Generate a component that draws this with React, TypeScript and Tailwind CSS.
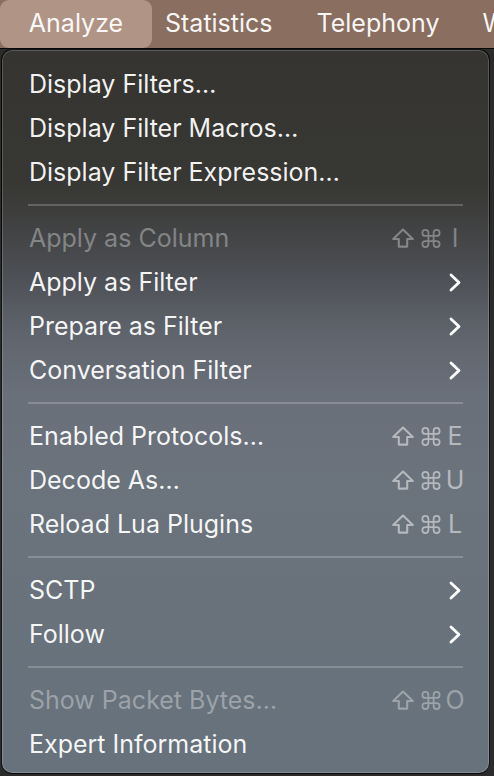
import React from "react";

type Item =
  | { kind: "sep" }
  | { kind: "item"; label: string; disabled?: boolean; sub?: boolean; key?: string };

const items: Item[] = [
  { kind: "item", label: "Display Filters…" },
  { kind: "item", label: "Display Filter Macros…" },
  { kind: "item", label: "Display Filter Expression…" },
  { kind: "sep" },
  { kind: "item", label: "Apply as Column", disabled: true, key: "I" },
  { kind: "item", label: "Apply as Filter", sub: true },
  { kind: "item", label: "Prepare as Filter", sub: true },
  { kind: "item", label: "Conversation Filter", sub: true },
  { kind: "sep" },
  { kind: "item", label: "Enabled Protocols…", key: "E" },
  { kind: "item", label: "Decode As…", key: "U" },
  { kind: "item", label: "Reload Lua Plugins", key: "L" },
  { kind: "sep" },
  { kind: "item", label: "SCTP", sub: true },
  { kind: "item", label: "Follow", sub: true },
  { kind: "sep" },
  { kind: "item", label: "Show Packet Bytes…", disabled: true, key: "O" },
  { kind: "item", label: "Expert Information" },
];

const ShiftIcon = () => (
  <svg width="22" height="20" viewBox="0 0 22 20" fill="none">
    <path
      d="M11 1.5 L20.8 11 H15.2 V18.6 H6.8 V11 H1.2 Z"
      stroke="currentColor"
      strokeWidth="2.1"
      strokeLinejoin="round"
    />
  </svg>
);

const CmdIcon = () => (
  <svg width="20" height="19" viewBox="-1 -1 22 22" fill="none">
    <path
      d="M7 3.5V16.5A3.5 3.5 0 1 1 3.5 13H16.5A3.5 3.5 0 1 1 13 16.5V3.5A3.5 3.5 0 1 1 16.5 7H3.5A3.5 3.5 0 1 1 7 3.5Z"
      stroke="currentColor"
      strokeWidth="2"
      strokeLinejoin="round"
    />
  </svg>
);

const Chevron = () => (
  <svg width="12" height="19" viewBox="0 0 12 19" fill="none" className="mr-[4px]">
    <path d="M2 2 L10 9.5 L2 17" stroke="white" strokeWidth="2.8" strokeLinecap="round" strokeLinejoin="round" />
  </svg>
);

export default function App() {
  return (
    <div
      className="w-[494px] h-[776px] overflow-hidden bg-[#2b2b2b] text-[25px]"
      style={{ fontFamily: "Inter, 'Liberation Sans', sans-serif" }}
    >
      {/* menu bar */}
      <div className="h-[48px] bg-[#8a6f61] flex items-center text-white/95 whitespace-nowrap overflow-hidden">
        <div className="shrink-0 w-[152px] h-[48px] rounded-[9px] bg-[#b09587] flex items-center justify-center">
          Analyze
        </div>
        <span className="shrink-0 ml-[13px]">Statistics</span>
        <span className="shrink-0 ml-[44px]">Telephony</span>
        <span className="shrink-0 ml-[43px]">Wireless</span>
      </div>
      <div className="h-[1px] bg-black/80" />

      {/* dropdown */}
      <div className="ml-[1px] w-[489px] h-[725px] rounded-[11px] border border-black/80 shadow-[inset_0_0_0_1px_rgba(255,255,255,0.18)] bg-[linear-gradient(180deg,#353430_0%,#373733_18%,#3d3d3c_22%,#4c4f54_31%,#5f646c_39%,#6a707a_48%,#6b737c_60%,#67727c_100%)] pt-[12px] pb-[9px]">
        {items.map((it, i) =>
          it.kind === "sep" ? (
            <div key={i} className="h-[22px] flex items-center px-[26px]">
              <div className="h-[2px] w-full bg-white/20" />
            </div>
          ) : (
            <div
              key={i}
              className={`h-[44px] flex items-center justify-between pl-[27px] pr-[24px] ${
                it.disabled ? "text-white/35" : "text-white/95"
              }`}
            >
              <span className="leading-none">{it.label}</span>
              {it.sub && <Chevron />}
              {it.key && (
                <div className={`flex items-center ${it.disabled ? "text-white/35" : "text-white/50"}`}>
                  <ShiftIcon />
                  <span className="ml-[7px]">
                    <CmdIcon />
                  </span>
                  <span className="ml-[4px] w-[20px] text-center leading-none">{it.key}</span>
                </div>
              )}
            </div>
          )
        )}
      </div>
    </div>
  );
}
